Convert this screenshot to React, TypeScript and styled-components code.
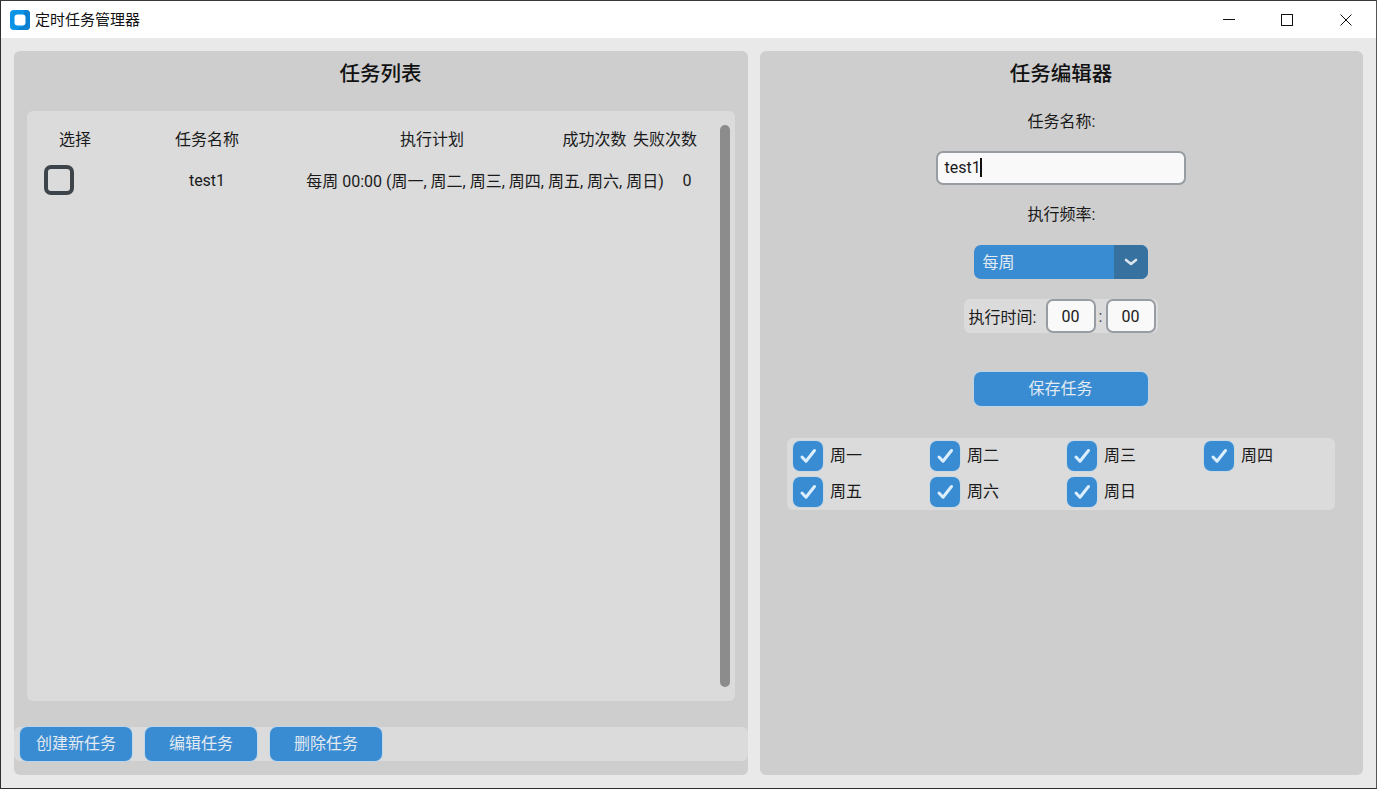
import React from "react";
import styled, { createGlobalStyle } from "styled-components";

const Global = createGlobalStyle`
  html, body { margin: 0; padding: 0; height: 100%; overflow: hidden; }
  #root { height: 100%; }
  * { box-sizing: border-box; }
  body { font-family: Roboto, "Noto Sans CJK SC", sans-serif; color: #1a1a1a; }
`;

const Win = styled.div`
  width: 1377px; height: 789px; display: flex; flex-direction: column;
  background: #e9e9e9; border: 1px solid #2e2e2e; border-top-color: #3a3a3a; border-right-color: #555;
`;
const TitleBar = styled.div`
  height: 37px; flex: none; background: #fff; display: flex; align-items: center; padding-left: 9px;
`;
const AppIcon = styled.svg`width: 20px; height: 20px; flex: none; margin-right: 5px;`;
const TitleText = styled.div`font-size: 15px; color: #111; font-weight: 400; flex: 1; line-height: 20px;`;
const WinBtn = styled.div<{ $w: number }>`width: ${(p) => p.$w}px; height: 37px; display: flex; align-items: center; justify-content: center;`;

const Body = styled.div`
  flex: 1; display: flex; gap: 12px; padding: 13px; min-height: 0;
`;
const Panel = styled.div<{ $w: number }>`
  width: ${(p) => p.$w}px; background: #cecece; border-radius: 6px; display: flex; flex-direction: column;
`;
const PanelTitle = styled.div`
  height: 42px; flex: none; display: flex; align-items: center; justify-content: center;
  font-size: 20.5px; font-weight: 500; color: #111; padding-right: 1px;
`;
const ListCard = styled.div`
  margin: 18px 13px 0; height: 590px; flex: none; background: #dbdbdb; border-radius: 6px;
  display: flex; padding: 14px 5px 14px 0;
`;
const Table = styled.div`flex: 1; min-width: 0;`;
const HeaderRow = styled.div`
  display: grid; grid-template-columns: 96px 168px 282px 43px 98px; height: 26px; align-items: center;
  font-size: 16px; white-space: nowrap;
`;
const DataRow = styled.div`
  display: grid; grid-template-columns: 94px 172px 384px 20px; height: 58px; align-items: center;
  font-size: 16px; white-space: nowrap;
`;
const Cell = styled.div`display: flex; justify-content: center;`;
const CheckCell = styled.div`padding-left: 17px;`;
const Scroll = styled.div`width: 10px; flex: none; background: #8c8c8c; border-radius: 5px;`;
const BottomBar = styled.div`
  margin-top: 26px; height: 34px; background: #dbdbdb; border-radius: 6px; display: flex; padding-left: 6px; gap: 13px; flex: none;
`;
const Btn = styled.div<{ $w: number }>`
  width: ${(p) => p.$w}px; height: 34px; background: #3a8cd2; box-shadow: 0 0 0 1px rgba(180, 214, 240, 0.75); border-radius: 7px;
  color: #e2eaf2; font-size: 16px; font-weight: 400; display: flex; align-items: center; justify-content: center; flex: none;
  padding-bottom: 4px;
`;
const EditorForm = styled.div`display: flex; flex-direction: column; align-items: center; padding-right: 2px;`;
const Label = styled.div<{ $mt: number }>`
  margin-top: ${(p) => p.$mt}px; height: 24px; line-height: 24px; font-size: 16px; font-weight: 400; color: #1a1a1a; padding-left: 2px;
`;
const NameInput = styled.div`
  margin-top: 17px; width: 250px; height: 34px; background: #f9f9fa; border: 2px solid #979da2; border-radius: 7px;
  font-size: 16px; padding: 0 0 2px 7px; display: flex; align-items: center; color: #1a1a1a;
`;
const Caret = styled.span`width: 2px; height: 19px; background: #111; margin-left: -1px;`;
const Select = styled.div`
  margin-top: 18px; width: 174px; height: 34px; border-radius: 7px; background: #3a8cd2; display: flex; overflow: hidden; flex: none;
  color: #e2eaf2; font-size: 16px; font-weight: 400;
`;
const SelectText = styled.div`flex: 1; padding: 0 0 2px 9px; display: flex; align-items: center;`;
const SelectArrow = styled.div`width: 34px; background: #36719f; display: flex; align-items: center; justify-content: center;`;
const TimeGroup = styled.div`
  margin-top: 20px; width: 194px; height: 34px; background: #dbdbdb; border-radius: 6px; display: flex; align-items: center;
  font-size: 16px; padding-left: 5px;
`;
const TimeLabel = styled.div`width: 77px; flex: none; white-space: nowrap;`;
const TimeBox = styled.div`
  width: 50px; height: 34px; flex: none; background: #f9f9fa; border: 2px solid #979da2; border-radius: 7px;
  display: flex; align-items: center; justify-content: center; font-size: 16px;
`;
const Colon = styled.div`width: 10px; text-align: center; flex: none; color: #444;`;
const SaveBtn = styled(Btn)`margin-top: 39px;`;
const WeekCard = styled.div`
  margin: 32px 0 0 27px; width: 548px; height: 72px; background: #dbdbdb; border-radius: 6px; padding: 3px 0 0 6px;
  display: grid; grid-template-columns: repeat(4, 137px); grid-auto-rows: 30px; row-gap: 6px;
`;
const Day = styled.div`display: flex; align-items: center; font-size: 16px; gap: 7px;`;
const DayText = styled.span`padding-bottom: 5px;`;
const CheckBox = styled.div`
  width: 30px; height: 30px; border-radius: 7px; background: #3a8cd2; box-shadow: 0 0 0 1px rgba(180, 214, 240, 0.45);
  display: flex; align-items: center; justify-content: center; flex: none;
`;
const EmptyCheck = styled.div`width: 30px; height: 30px; border-radius: 7px; border: 4px solid #3e454a;`;

const days = ["周一", "周二", "周三", "周四", "周五", "周六", "周日"];

export default function App() {
  return (
    <Win>
      <Global />
      <TitleBar>
        <AppIcon viewBox="0 0 20 20">
          <rect width="20" height="20" rx="4" fill="#0a94e8" />
          <path d="M14 0h2a4 4 0 0 1 4 4v12a4 4 0 0 1-4 4H6l8-4z" fill="#0b7fd0" />
          <rect x="4.5" y="4.5" width="11" height="11" rx="3" fill="#fff" />
        </AppIcon>
        <TitleText>定时任务管理器</TitleText>
        <WinBtn $w={58}>
          <svg width="12" height="12" viewBox="0 0 12 12"><path d="M0 5.5h12" stroke="#111" strokeWidth="1" /></svg>
        </WinBtn>
        <WinBtn $w={58}>
          <svg width="12" height="12" viewBox="0 0 12 12"><rect x=".5" y=".5" width="11" height="11" fill="none" stroke="#111" /></svg>
        </WinBtn>
        <WinBtn $w={60}>
          <svg width="12" height="12" viewBox="0 0 12 12"><path d="M.5.5l11 11M11.5.5l-11 11" stroke="#111" /></svg>
        </WinBtn>
      </TitleBar>
      <Body>
        <Panel $w={734}>
          <PanelTitle>任务列表</PanelTitle>
          <ListCard>
            <Table>
              <HeaderRow>
                <Cell>选择</Cell>
                <Cell>任务名称</Cell>
                <Cell>执行计划</Cell>
                <Cell>成功次数</Cell>
                <Cell>失败次数</Cell>
              </HeaderRow>
              <DataRow>
                <CheckCell><EmptyCheck /></CheckCell>
                <Cell>test1</Cell>
                <Cell>每周 00:00 (周一, 周二, 周三, 周四, 周五, 周六, 周日)</Cell>
                <Cell>0</Cell>
              </DataRow>
            </Table>
            <Scroll />
          </ListCard>
          <BottomBar>
            <Btn $w={112}>创建新任务</Btn>
            <Btn $w={112}>编辑任务</Btn>
            <Btn $w={112}>删除任务</Btn>
          </BottomBar>
        </Panel>
        <Panel $w={603}>
          <PanelTitle>任务编辑器</PanelTitle>
          <EditorForm>
            <Label $mt={17}>任务名称:</Label>
            <NameInput>test1<Caret /></NameInput>
            <Label $mt={18}>执行频率:</Label>
            <Select>
              <SelectText>每周</SelectText>
              <SelectArrow>
                <svg width="14" height="8" viewBox="0 0 14 8"><path d="M2 2l5 4 5-4" fill="none" stroke="#dce4ee" strokeWidth="2.6" strokeLinecap="round" strokeLinejoin="round" /></svg>
              </SelectArrow>
            </Select>
            <TimeGroup>
              <TimeLabel>执行时间:</TimeLabel>
              <TimeBox>00</TimeBox>
              <Colon>:</Colon>
              <TimeBox>00</TimeBox>
            </TimeGroup>
            <SaveBtn $w={174}>保存任务</SaveBtn>
          </EditorForm>
          <WeekCard>
            {days.map((d) => (
              <Day key={d}>
                <CheckBox>
                  <svg width="22" height="22" viewBox="0 0 22 22"><path d="M5 12l4 4.2L17.5 5.5" fill="none" stroke="#dcefff" strokeWidth="3" strokeLinecap="round" strokeLinejoin="round" /></svg>
                </CheckBox>
                <DayText>{d}</DayText>
              </Day>
            ))}
          </WeekCard>
        </Panel>
      </Body>
    </Win>
  );
}
